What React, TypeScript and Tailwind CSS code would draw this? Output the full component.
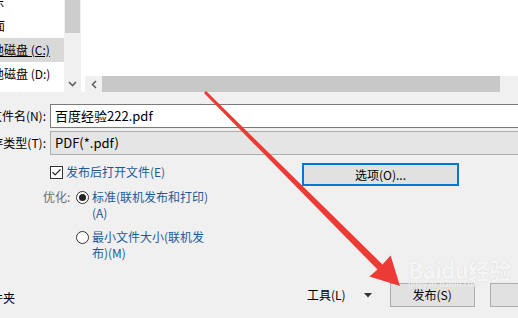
import { Check } from 'lucide-react';

const treeRows = [
  { label: '音乐', shift: -20 },
  { label: '桌面', shift: -19 },
  { label: '本地磁盘 (C:)', shift: -20, selected: true },
  { label: '本地磁盘 (D:)', shift: -20 },
  { label: '网络', shift: 0 },
];

function Radio({ checked }: { checked?: boolean }) {
  return (
    <span className="mt-[2px] flex h-[13px] w-[13px] shrink-0 items-center justify-center rounded-full border border-[#333] bg-white">
      {checked && <span className="h-[7px] w-[7px] rounded-full bg-[#222]" />}
    </span>
  );
}

export default function App() {
  return (
    <div className="relative flex h-[318px] w-[518px] flex-col overflow-hidden bg-[#f0f0f0] font-['Noto_Sans_CJK_SC',sans-serif] text-[12px] text-black">
      {/* folder browser */}
      <div className="flex h-[92px]">
        <div className="w-[64px] overflow-hidden bg-white">
          <div className="mt-[-10px]">
            {treeRows.map((row) => (
              <div
                key={row.label}
                className={`flex h-[24px] items-center whitespace-nowrap ${row.selected ? 'bg-[#d9d9d9]' : ''}`}
              >
                <span
                  className={`leading-none ${row.selected ? 'underline' : ''}`}
                  style={{ marginLeft: row.shift }}
                >
                  {row.label}
                </span>
              </div>
            ))}
          </div>
        </div>
        <div className="flex w-[17px] flex-col bg-[#f0f0f0]">
          <div className="mx-[1px] h-[33px] bg-[#cdcdcd]" />
          <div className="flex-1" />
          <div className="flex h-[16px] items-center justify-center">
            <svg width="9" height="6" viewBox="0 0 9 6">
              <polyline points="1,1 4.5,4.5 8,1" fill="none" stroke="#606060" strokeWidth="1.6" />
            </svg>
          </div>
        </div>
        <div className="flex flex-1 flex-col bg-white">
          <div className="flex-1" />
          <div className="ml-[4px] flex h-[16px] bg-[#f0f0f0]">
            <div className="flex w-[17px] items-center justify-center">
              <svg width="6" height="9" viewBox="0 0 6 9">
                <polyline points="5,1 1.5,4.5 5,8" fill="none" stroke="#606060" strokeWidth="1.6" />
              </svg>
            </div>
            <div className="w-[398px] bg-[#c8c8c8]" />
            <div className="flex-1" />
          </div>
        </div>
      </div>

      {/* file name + type */}
      <div className="mt-[12px] flex h-[24px] items-center">
        <div className="flex w-[50px] justify-end whitespace-nowrap pr-[4px]">文件名(N):</div>
        <div className="-mr-[4px] flex h-full flex-1 items-center border border-[#7a7a7a] bg-white pl-[4px] text-[13px]">
          百度经验222.pdf
        </div>
      </div>
      <div className="mt-[3px] flex h-[24px] items-center">
        <div className="flex w-[50px] justify-end whitespace-nowrap pr-[4px]">保存类型(T):</div>
        <div className="-mr-[4px] flex h-full flex-1 items-center border border-[#adadad] bg-[#e5e5e5] pl-[4px] text-[13px]">
          PDF(*.pdf)
        </div>
      </div>

      {/* options */}
      <div className="flex">
        <div className="w-[302px] shrink-0">
          <div className="mt-[9px] flex h-[16px] items-center pl-[50px]">
            <span className="flex h-[13px] w-[13px] items-center justify-center border border-[#333] bg-white">
              <Check className="h-[11px] w-[11px] text-[#222]" strokeWidth={2.5} />
            </span>
            <span className="ml-[3px] text-[#1e5a96]">发布后打开文件(E)</span>
          </div>
          <div className="mt-[9px] flex items-start leading-[16px]">
            <span className="ml-[43px] w-[33px] text-[#6d6d6d]">优化:</span>
            <Radio checked />
            <span className="ml-[3px] text-[#1e5a96]">
              标准(联机发布和打印)
              <br />
              (A)
            </span>
          </div>
          <div className="mt-[8px] flex items-start pl-[76px] leading-[16px]">
            <Radio />
            <span className="ml-[3px] text-[#1e5a96]">
              最小文件大小(联机发
              <br />
              布)(M)
            </span>
          </div>
        </div>
        <div className="pt-[8px]">
          <div className="flex h-[23px] w-[157px] items-center justify-center border-2 border-[#0078d7] bg-[#e1e1e1]">
            选项(O)...
          </div>
        </div>
      </div>

      {/* bottom buttons */}
      <div className="mb-[11px] mt-auto flex h-[24px] items-center whitespace-nowrap">
        <div className="mt-[5px] flex w-[15px] shrink-0 justify-end">隐藏文件夹</div>
        <span className="ml-[292px] shrink-0">工具(L)</span>
        <svg className="ml-[18px] shrink-0" width="8" height="5" viewBox="0 0 8 5">
          <polygon points="0,0 8,0 4,4.5" fill="#333" />
        </svg>
        <div className="ml-[18px] flex h-full w-[85px] shrink-0 items-center justify-center border border-[#adadad] bg-[#e1e1e1]">
          发布(S)
        </div>
        <div className="ml-[15px] flex h-full w-[85px] shrink-0 items-center justify-center border border-[#adadad] bg-[#e1e1e1]">
          取消
        </div>
      </div>

      {/* watermark */}
      <div className="pointer-events-none absolute left-[408px] top-[258px] flex flex-col items-start leading-none text-white/80 [text-shadow:0_0_1px_#c8c8c8]">
        <span className="text-[22px] font-bold tracking-tight">Baidu经验</span>
        <span className="text-[8px] tracking-wide">jingyan.baidu.com</span>
      </div>

      {/* annotation arrow */}
      <svg className="pointer-events-none absolute left-0 top-0" width="518" height="318" viewBox="0 0 518 318">
        <polygon
          points="206,91 382.5,264.5 390.6,255.4 400,286 369.4,276.6 377.5,269.5 204,93"
          fill="#ec3a35"
        />
      </svg>
    </div>
  );
}
